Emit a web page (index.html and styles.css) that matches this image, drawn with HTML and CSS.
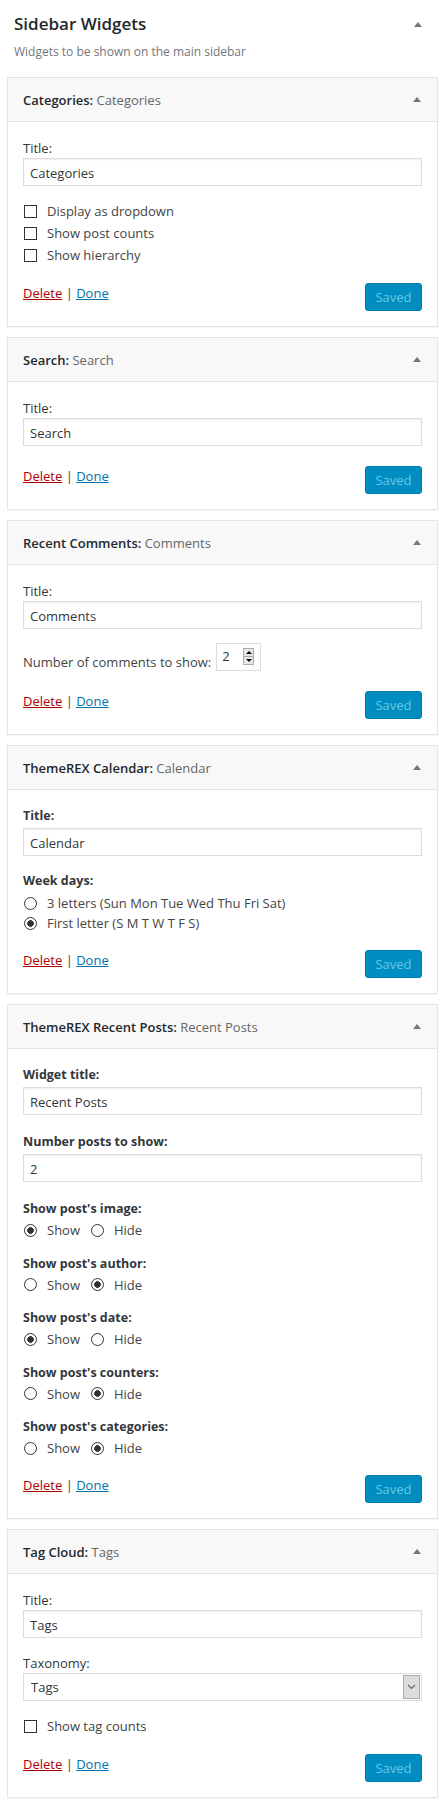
FILE: index.html
```html
<!DOCTYPE html>
<html lang="en">

<head>
  <meta charset="UTF-8">
  <meta name="viewport" content="width=device-width, initial-scale=1.0">
  <title>Sidebar Widgets</title>
  <link rel="stylesheet" href="styles.css">
</head>

<body>
  <div class="sidebar">
    <div class="sidebar-head">
      <h2>Sidebar Widgets</h2>
      <span class="toggle"></span>
    </div>
    <p class="sidebar-desc">Widgets to be shown on the main sidebar</p>

    <!-- Categories -->
    <div class="widget">
      <div class="widget-top">
        <h3>Categories: <span>Categories</span></h3>
        <span class="toggle"></span>
      </div>
      <div class="widget-inside">
        <label class="field-label">Title:</label>
        <input class="text-input" type="text" value="Categories">
        <div class="checks">
          <label class="check"><input type="checkbox">Display as dropdown</label>
          <label class="check"><input type="checkbox">Show post counts</label>
          <label class="check"><input type="checkbox">Show hierarchy</label>
        </div>
        <div class="widget-actions after-checks">
          <div class="links"><a href="#" class="delete">Delete</a> | <a href="#" class="done">Done</a></div>
          <button class="saved" disabled>Saved</button>
        </div>
      </div>
    </div>

    <!-- Search -->
    <div class="widget">
      <div class="widget-top">
        <h3>Search: <span>Search</span></h3>
        <span class="toggle"></span>
      </div>
      <div class="widget-inside">
        <label class="field-label">Title:</label>
        <input class="text-input" type="text" value="Search">
        <div class="widget-actions">
          <div class="links"><a href="#" class="delete">Delete</a> | <a href="#" class="done">Done</a></div>
          <button class="saved" disabled>Saved</button>
        </div>
      </div>
    </div>

    <!-- Recent Comments -->
    <div class="widget">
      <div class="widget-top">
        <h3>Recent Comments: <span>Comments</span></h3>
        <span class="toggle"></span>
      </div>
      <div class="widget-inside">
        <label class="field-label">Title:</label>
        <input class="text-input" type="text" value="Comments">
        <div class="number-row">
          <span class="number-label">Number of comments to show:</span>
          <div class="number-box">
            <span class="number-value">2</span>
            <span class="spinner">
              <span class="spin-up"></span>
              <span class="spin-down"></span>
            </span>
          </div>
        </div>
        <div class="widget-actions">
          <div class="links"><a href="#" class="delete">Delete</a> | <a href="#" class="done">Done</a></div>
          <button class="saved" disabled>Saved</button>
        </div>
      </div>
    </div>

    <!-- ThemeREX Calendar -->
    <div class="widget">
      <div class="widget-top">
        <h3>ThemeREX Calendar: <span>Calendar</span></h3>
        <span class="toggle"></span>
      </div>
      <div class="widget-inside">
        <label class="field-label bold">Title:</label>
        <input class="text-input" type="text" value="Calendar">
        <label class="field-label bold week">Week days:</label>
        <div class="radio-list">
          <label class="radio"><input type="radio" name="cal">3 letters (Sun Mon Tue Wed Thu Fri Sat)</label>
          <label class="radio"><input type="radio" name="cal" checked>First letter (S M T W T F S)</label>
        </div>
        <div class="widget-actions after-radios">
          <div class="links"><a href="#" class="delete">Delete</a> | <a href="#" class="done">Done</a></div>
          <button class="saved" disabled>Saved</button>
        </div>
      </div>
    </div>

    <!-- ThemeREX Recent Posts -->
    <div class="widget">
      <div class="widget-top">
        <h3>ThemeREX Recent Posts: <span>Recent Posts</span></h3>
        <span class="toggle"></span>
      </div>
      <div class="widget-inside">
        <label class="field-label bold">Widget title:</label>
        <input class="text-input" type="text" value="Recent Posts">
        <label class="field-label bold group">Number posts to show:</label>
        <input class="text-input" type="text" value="2">

        <label class="field-label bold group">Show post's image:</label>
        <div class="radio-row">
          <label class="radio"><input type="radio" name="img" checked>Show</label>
          <label class="radio"><input type="radio" name="img">Hide</label>
        </div>
        <label class="field-label bold group-short">Show post's author:</label>
        <div class="radio-row">
          <label class="radio"><input type="radio" name="author">Show</label>
          <label class="radio"><input type="radio" name="author" checked>Hide</label>
        </div>
        <label class="field-label bold group-short">Show post's date:</label>
        <div class="radio-row">
          <label class="radio"><input type="radio" name="date" checked>Show</label>
          <label class="radio"><input type="radio" name="date">Hide</label>
        </div>
        <label class="field-label bold group-short">Show post's counters:</label>
        <div class="radio-row">
          <label class="radio"><input type="radio" name="counters">Show</label>
          <label class="radio"><input type="radio" name="counters" checked>Hide</label>
        </div>
        <label class="field-label bold group-short">Show post's categories:</label>
        <div class="radio-row">
          <label class="radio"><input type="radio" name="cats">Show</label>
          <label class="radio"><input type="radio" name="cats" checked>Hide</label>
        </div>
        <div class="widget-actions after-radios">
          <div class="links"><a href="#" class="delete">Delete</a> | <a href="#" class="done">Done</a></div>
          <button class="saved" disabled>Saved</button>
        </div>
      </div>
    </div>

    <!-- Tag Cloud -->
    <div class="widget">
      <div class="widget-top">
        <h3>Tag Cloud: <span>Tags</span></h3>
        <span class="toggle"></span>
      </div>
      <div class="widget-inside">
        <label class="field-label">Title:</label>
        <input class="text-input" type="text" value="Tags">
        <label class="field-label taxonomy">Taxonomy:</label>
        <div class="select-box">
          <span>Tags</span>
          <span class="select-arrow">
            <svg width="9" height="6" viewBox="0 0 9 6"><path d="M1 1l3.5 3.5L8 1" fill="none" stroke="#666" stroke-width="1.2"/></svg>
          </span>
        </div>
        <div class="checks">
          <label class="check"><input type="checkbox">Show tag counts</label>
        </div>
        <div class="widget-actions after-checks">
          <div class="links"><a href="#" class="delete">Delete</a> | <a href="#" class="done">Done</a></div>
          <button class="saved" disabled>Saved</button>
        </div>
      </div>
    </div>
  </div>
</body>

</html>
```

FILE: styles.css
```css
* {
  margin: 0;
  padding: 0;
  box-sizing: border-box;
}

body {
  background-color: white;
  font-family: "Open Sans", "Noto Sans", sans-serif;
  font-size: 13px;
  color: #444;
}

.sidebar {
  padding: 12px 7px 0;
}

/* Sidebar heading */
.sidebar-head {
  display: flex;
  justify-content: space-between;
  align-items: center;
  padding: 0 16px 0 7px;
  height: 24px;
}

.sidebar-head h2 {
  font-size: 17px;
  font-weight: 600;
  color: #23282d;
  line-height: 24px;
}

.sidebar-desc {
  padding-left: 7px;
  margin-top: 7px;
  line-height: 18px;
  font-size: 12px;
  color: #72777c;
  margin-bottom: 16px;
}

.toggle {
  width: 0;
  height: 0;
  border-left: 4px solid transparent;
  border-right: 4px solid transparent;
  border-bottom: 5px solid #72777c;
}

/* Widget boxes */
.widget {
  border: 1px solid #e5e5e5;
  margin-bottom: 10px;
  background-color: white;
  box-shadow: 0 1px 1px rgba(0, 0, 0, 0.04);
}

.widget-top {
  height: 44px;
  background-color: #f8f8f8;
  border-bottom: 1px solid #e5e5e5;
  display: flex;
  justify-content: space-between;
  align-items: center;
  padding: 0 16px 0 15px;
}

.widget-top h3 {
  font-size: 13px;
  font-weight: 600;
  color: #23282d;
}

.widget-top h3 span {
  font-weight: 400;
  color: #666;
}

.widget-inside {
  padding: 17px 15px 15px;
}

.field-label {
  display: block;
  line-height: 18px;
  margin-bottom: 1px;
  color: #32373c;
}

.field-label.bold {
  font-weight: 700;
  font-size: 12.5px;
  margin-bottom: 3px;
}

.field-label.group {
  margin-top: 18px;
}

.field-label.week {
  margin-top: 16px;
}

.field-label.group-short {
  margin-top: 14.5px;
}

.field-label.taxonomy {
  margin-top: 16px;
}

.text-input {
  display: block;
  width: 100%;
  height: 28px;
  border: 1px solid #ddd;
  box-shadow: inset 0 1px 2px rgba(0, 0, 0, 0.07);
  padding: 2px 6px 0;
  font-family: inherit;
  font-size: 13px;
  color: #32373c;
  outline: none;
}

/* Checkboxes and radios */
.checks {
  margin-top: 14px;
}

.check,
.radio {
  display: flex;
  align-items: center;
  line-height: 22px;
  color: #444;
}

.radio-list .radio {
  line-height: 20px;
}

.check input,
.radio input {
  appearance: none;
  -webkit-appearance: none;
  width: 13px;
  height: 13px;
  border: 1px solid #333;
  background-color: white;
  margin: 0 10px 0 1px;
  flex-shrink: 0;
}

.radio input {
  border-radius: 50%;
}

.radio input:checked {
  background: radial-gradient(circle, #333 0, #333 3px, white 3.6px);
}

.radio-row {
  display: flex;
  gap: 10px;
  margin-top: -1px;
}

.radio-row .radio {
  line-height: 20px;
}

/* Number field */
.number-row {
  display: flex;
  align-items: flex-end;
  gap: 5px;
  margin-top: 14px;
}

.number-label {
  line-height: 18px;
}

.number-box {
  width: 45px;
  height: 28px;
  border: 1px solid #ddd;
  display: flex;
  align-items: center;
  padding: 0 6px 0 5px;
  justify-content: space-between;
}

.number-value {
  font-size: 13px;
  color: #32373c;
  margin-top: -3px;
}

.spinner {
  display: flex;
  flex-direction: column;
  width: 11px;
  height: 17px;
  border: 1px solid #aaa;
  margin-top: -2px;
}

.spin-up,
.spin-down {
  flex: 1;
  background-color: #e8e8e8;
  display: flex;
  justify-content: center;
  align-items: center;
}

.spin-up {
  border-bottom: 1px solid #aaa;
}

.spin-up::after,
.spin-down::after {
  content: "";
  border-left: 3px solid transparent;
  border-right: 3px solid transparent;
}

.spin-up::after {
  border-bottom: 3px solid #000;
}

.spin-down::after {
  border-top: 3px solid #000;
}

/* Select */
.select-box {
  height: 28px;
  border: 1px solid #ddd;
  display: flex;
  justify-content: space-between;
  align-items: stretch;
  padding-left: 7px;
  font-size: 13px;
  color: #32373c;
}

.select-box span:first-child {
  align-self: center;
}

.select-arrow {
  width: 17px;
  margin: 1px;
  background-color: #dcdcdc;
  border: 1px solid #a9a9a9;
  display: flex;
  justify-content: center;
  align-items: center;
}

/* Actions */
.widget-actions {
  display: flex;
  justify-content: space-between;
  align-items: flex-start;
  margin-top: 20px;
}

.widget-actions.after-checks {
  margin-top: 17px;
}

.widget-actions.after-radios {
  margin-top: 17px;
}

.links {
  line-height: 18px;
  margin-top: 1px;
  color: #444;
}

.links a {
  text-decoration: underline;
}

.links .delete {
  color: #a00;
}

.links .done {
  color: #0073aa;
}

.saved {
  height: 28px;
  width: 57px;
  border: 1px solid #007cb2;
  border-radius: 3px;
  background-color: #008ec2;
  color: #66c6e4;
  font-family: inherit;
  font-size: 13px;
  padding-bottom: 1px;
}
```
